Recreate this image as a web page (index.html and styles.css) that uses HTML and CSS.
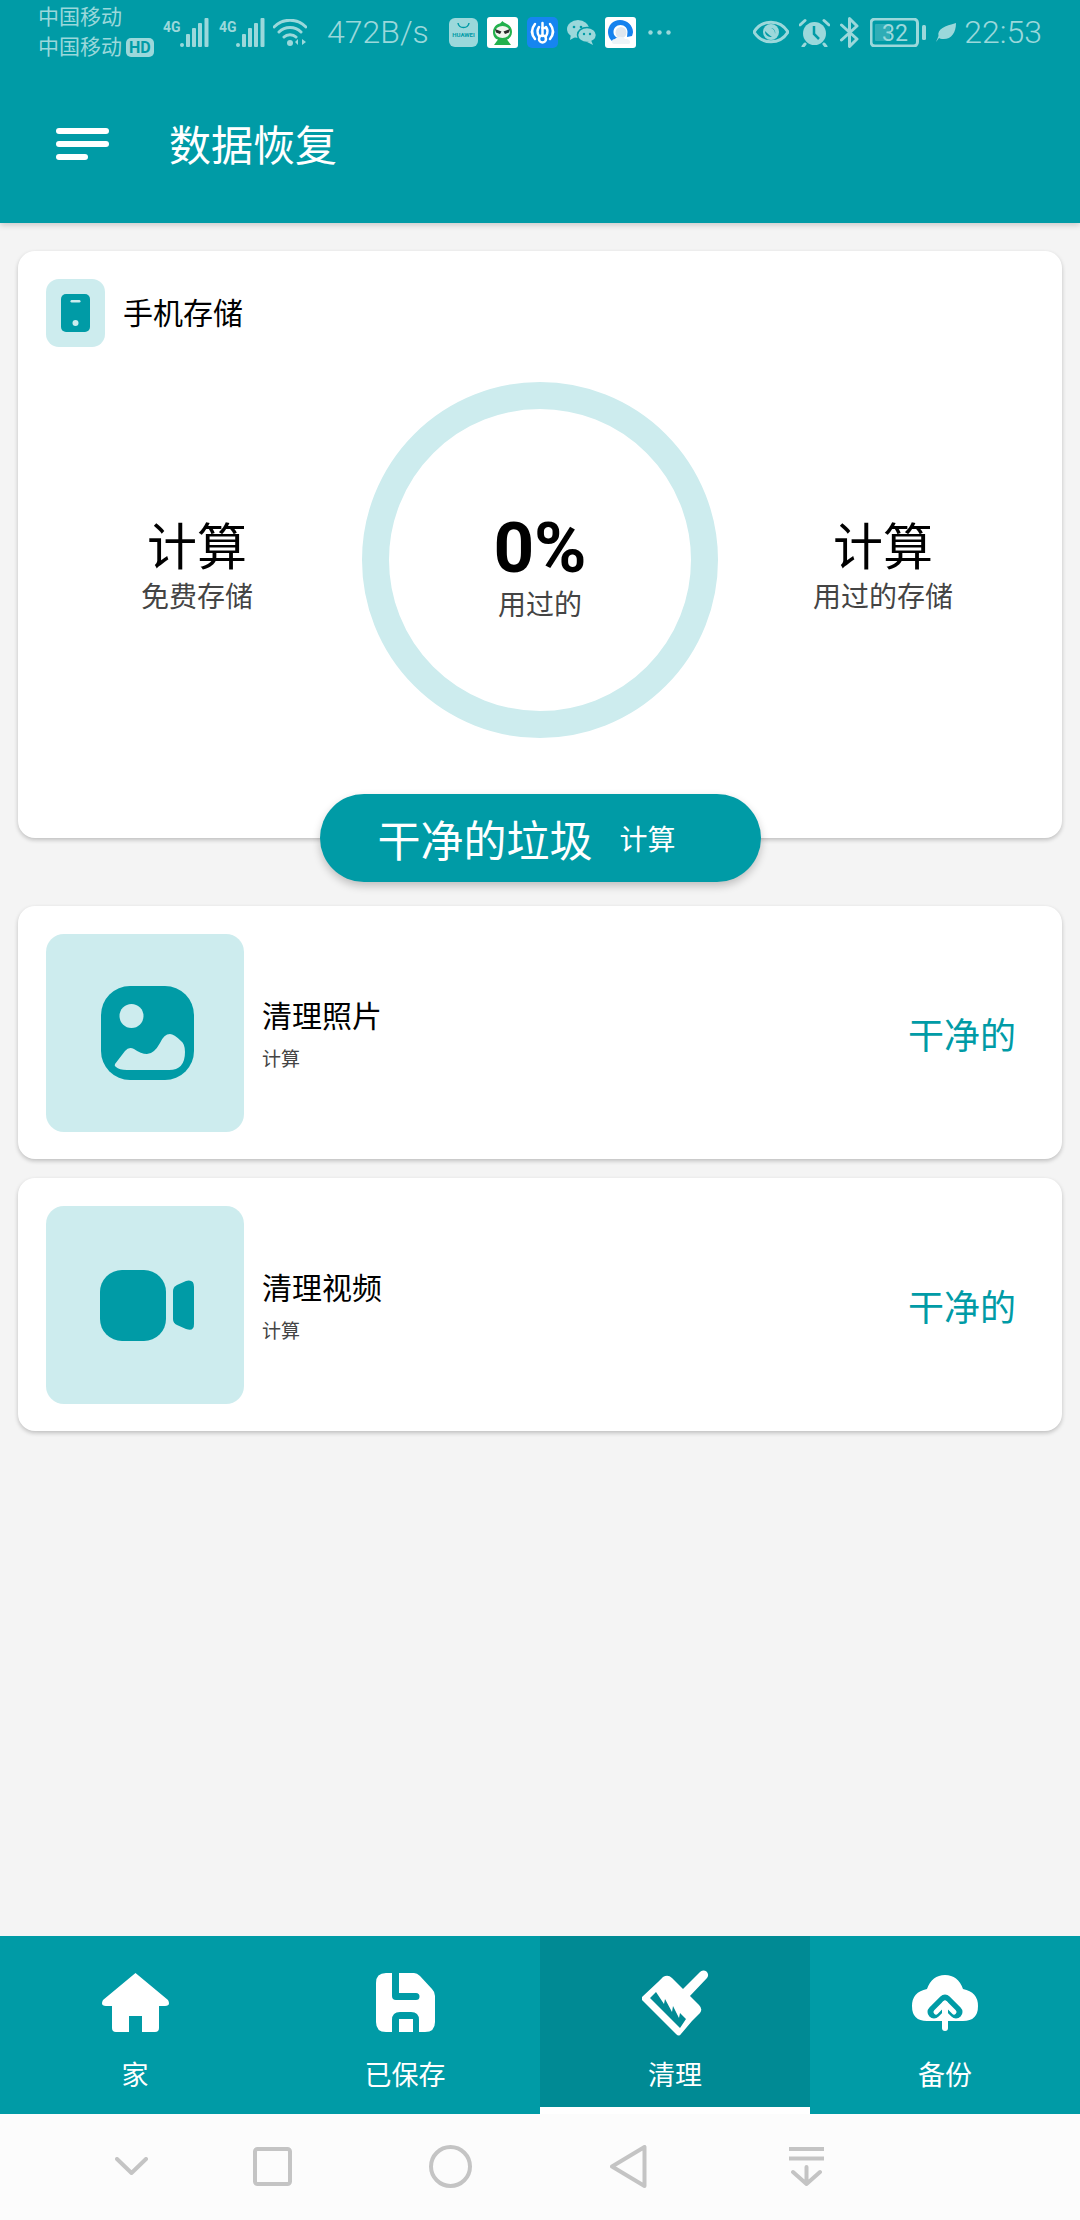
FILE: index.html
```html
<!DOCTYPE html>
<html>
<head>
	<title>数据恢复</title>
	<link rel="stylesheet" href="styles.css">
</head>
<body>
	<header class="app-header">
		<div class="status-bar">
			<div class="carriers">
				<div>中国移动</div>
				<div>中国移动<span class="hd">HD</span></div>
			</div>
			<svg class="signal" width="46" height="29" viewBox="0 0 46 29"><text x="0" y="14" class="net-type">4G</text><rect x="17" y="25" width="4" height="4" rx="2"/><rect x="23" y="16" width="4" height="13" rx="1"/><rect x="29" y="10" width="4" height="19" rx="1"/><rect x="35" y="5" width="4" height="24" rx="1"/><rect x="41.5" y="0" width="4" height="29" rx="1"/></svg>
			<svg class="signal" width="46" height="29" viewBox="0 0 46 29"><text x="0" y="14" class="net-type">4G</text><rect x="17" y="25" width="4" height="4" rx="2"/><rect x="23" y="16" width="4" height="13" rx="1"/><rect x="29" y="10" width="4" height="19" rx="1"/><rect x="35" y="5" width="4" height="24" rx="1"/><rect x="41.5" y="0" width="4" height="29" rx="1"/></svg>
			<svg class="wifi" width="34" height="27" viewBox="0 0 34 27"><path d="M1 8C10 -1 24 -1 33 8M6 13C12 7 22 7 28 13M11 18C14 15 20 15 23 18" class="line"/><circle cx="17" cy="24" r="3"/><path d="M25 26V20L22 23ZM29 20V26L33 23Z"/></svg>
			<span class="speed">472B/s</span>
			<div class="app-icons">
				<svg width="29" height="29" viewBox="0 0 29 29"><rect width="29" height="29" rx="6"/><path d="M9 5C10 11 19 11 20 5" class="bag"/><text x="14.500" y="19" class="huawei">HUAWEI</text></svg>
				<svg width="31" height="31" viewBox="0 0 31 31"><rect width="31" height="31" rx="3" fill="#fff"/><path d="M15.500 4C16 5 18 6 19 6.500C23 8 25 11 25 15C25 19 22 22 20 22.500L24 28H7L11 22.500C8 22 6 19 6 15C6 10 10 7 13 6.500Z" fill="#23b14d"/><ellipse cx="15.500" cy="15" rx="7.500" ry="6" fill="#f1f5ee"/><path d="M8 12L14.500 14.500L13 17L9 15.500ZM23 12L16.500 14.500L18 17L22 15.500Z" fill="#2b2b2b"/></svg>
				<svg width="31" height="31" viewBox="0 0 31 31"><rect width="31" height="31" rx="5" fill="#1685f0"/><path d="M8 7C4 12 4 17 8 22M12 10C10 13 10 16 12 19M23 7C27 12 27 17 23 22M19 10C21 13 21 16 19 19" class="key"/><path d="M15.500 6V19" class="key"/><path d="M15.500 11H19" class="key"/><circle cx="15.500" cy="22" r="3.500" class="key"/></svg>
				<svg width="29" height="25" viewBox="0 0 29 25"><ellipse cx="11" cy="9" rx="11" ry="9"/><path d="M4 14L3 20L10 16Z"/><ellipse cx="20" cy="15" rx="9.500" ry="7.500" stroke="#009ba6" stroke-width="1.500"/><path d="M24 20L26 25L20 22Z"/><circle cx="7" cy="7" r="1.300" fill="#009ba6"/><circle cx="14" cy="7" r="1.300" fill="#009ba6"/><circle cx="17" cy="14" r="1.200" fill="#009ba6"/><circle cx="23" cy="14" r="1.200" fill="#009ba6"/></svg>
				<svg width="31" height="31" viewBox="0 0 31 31"><rect width="31" height="31" rx="3" fill="#fff"/><path d="M15 3C8 3 3 8.500 3 15C3 20 6 24 10 26L14 21C10.500 20.500 8.500 18 8.500 15C8.500 11 11.500 8 15.500 8C19.500 8 22.500 11 22.500 15L22 20L27 19C27.500 17.500 28 16 28 15C28 8.500 22 3 15 3Z" fill="#1682ee"/><circle cx="16" cy="15.500" r="5.500" fill="#dfe6ee"/><path d="M9 27C6 27 6 22 10 22C12 19 18 19 20 22C25 21 27 27 23 27Z" fill="#eef3f8"/></svg>
				<svg class="more" width="23" height="5" viewBox="0 0 23 5"><circle cx="2.500" cy="2.500" r="2.200"/><circle cx="11.500" cy="2.500" r="2.200"/><circle cx="20.500" cy="2.500" r="2.200"/></svg>
			</div>
			<div class="status-right">
				<svg width="36" height="24" viewBox="0 0 36 24"><path d="M1 12C9 -1 27 -1 35 12C27 25 9 25 1 12Z" class="line"/><circle cx="18" cy="12" r="8"/><path d="M18 8A4.500 4.500 0 0 1 22 14A6 6 0 0 0 18 8Z" fill="#009ba6"/><path d="M12 11C12 15 15 17 19 17C16 15 14 13 12 11Z" fill="#009ba6"/></svg>
				<svg width="31" height="29" viewBox="0 0 31 29"><circle cx="15.500" cy="15.500" r="11.500"/><path d="M1 7L6 2.500M30 7L25 2.500M6 26L4 28.500M25 26L27 28.500" class="line"/><path d="M15 8V16L20 21" stroke="#009ba6" stroke-width="2.500" fill="none"/></svg>
				<svg width="20" height="31" viewBox="0 0 20 31"><path d="M1.500 8L17 22L9.500 29.500V1.500L17 9L1.500 23" class="line"/></svg>
				<svg width="56" height="29" viewBox="0 0 56 29"><rect x="1" y="1" width="46.500" height="27" rx="4" class="line"/><rect x="5" y="6" width="15" height="17" rx="1" class="battery-fill"/><text x="25" y="23" class="battery-text">32</text><rect x="52" y="7" width="4" height="15" rx="1.500"/></svg>
				<svg width="20" height="19" viewBox="0 0 20 19"><path d="M20 0C20 10 15 17 6 16C5 16 4 15.500 3 15L0 19C1 17 2 14 2.500 13C1 6 9 3 20 0Z"/></svg>
				<span class="clock">22:53</span>
			</div>
		</div>
		<div class="toolbar">
			<div class="menu-icon"><i></i><i></i><i class="short"></i></div>
			<h1 class="page-title">数据恢复</h1>
		</div>
	</header>

	<main class="content">
		<section class="card storage-card">
			<div class="storage-head">
				<div class="phone-box">
					<svg width="29" height="38" viewBox="0 0 29 38"><rect width="29" height="38" rx="5" fill="#009ba6"/><rect x="9.500" y="6" width="10" height="2.500" rx="1.200" fill="#cdecee"/><circle cx="14.500" cy="29" r="3" fill="#cdecee"/></svg>
				</div>
				<span class="storage-name">手机存储</span>
			</div>
			<div class="storage-body">
				<div class="stat">
					<div class="stat-value">计算</div>
					<div class="stat-label">免费存储</div>
				</div>
				<div class="ring">
					<div class="ring-value">0%</div>
					<div class="ring-label">用过的</div>
				</div>
				<div class="stat">
					<div class="stat-value">计算</div>
					<div class="stat-label">用过的存储</div>
				</div>
			</div>
		</section>

		<button class="clean-button"><span class="clean-title">干净的垃圾</span><span class="clean-size">计算</span></button>

		<section class="card clean-row">
			<div class="thumb">
				<svg width="93" height="94" viewBox="0 0 93 94"><rect width="93" height="94" rx="29" fill="#009ba6"/><circle cx="30.500" cy="30" r="12" fill="#cdecee"/><path d="M14 78L24 65Q28 60 33 63Q40 68 46 68Q53 68 59 57Q63 48 69 48Q73 48 80 55Q84 58 84 66Q84 84 68 84H26Q18 84 15 81Q13 80 14 78Z" fill="#cdecee"/></svg>
			</div>
			<div class="row-text">
				<div class="row-title">清理照片</div>
				<div class="row-sub">计算</div>
			</div>
			<span class="row-action">干净的</span>
		</section>

		<section class="card clean-row">
			<div class="thumb">
				<svg width="94" height="71" viewBox="0 0 94 71"><rect width="66" height="71" rx="22" fill="#009ba6"/><path d="M73 21Q73 17 77 15L86 11Q94 9 94 17V54Q94 62 86 59L77 55Q73 53 73 49Z" fill="#009ba6"/></svg>
			</div>
			<div class="row-text">
				<div class="row-title">清理视频</div>
				<div class="row-sub">计算</div>
			</div>
			<span class="row-action">干净的</span>
		</section>
	</main>

	<nav class="tabs">
		<div class="tab">
			<div class="tab-icon"><svg width="67" height="59" viewBox="0 0 67 59"><path d="M33.500 0L66 27Q69 33 63 33H57V55Q57 59 53 59H40V43H27V59H14Q10 59 10 55V33H4Q-2 33 1 27Z" fill="#fff"/></svg></div>
			<span class="tab-label">家</span>
		</div>
		<div class="tab">
			<div class="tab-icon"><svg width="59" height="59" viewBox="0 0 59 59"><path d="M10 0H38Q41 0 44 3L56 16Q59 19 59 23V49Q59 59 49 59H10Q0 59 0 49V10Q0 0 10 0Z" fill="#fff"/><path d="M16 0H23V20H40A3.500 3.500 0 0 1 40 27H20Q16 27 16 23ZM16 59V47Q16 39 24 39H35Q43 39 43 47V59H37V46H23V59Z" fill="#009ba6"/></svg></div>
			<span class="tab-label">已保存</span>
		</div>
		<div class="tab active">
			<div class="tab-icon"><svg width="67" height="67" viewBox="0 0 67 67"><path d="M40 21L58 3A4.500 4.500 0 0 1 65 9L47 28Z" fill="#fff"/><path d="M0 28L16 13L21 8Q26 5 30 9L57 36Q61 40 58 44L50 52L39 65Q37 68 34 65L1 32Q-1 30 0 28Z" fill="#fff"/><path d="M8 29L14 23L22 35L23 30L30 43L31 37L37 49L38 44L44 50L38 59Z" fill="#008a94"/></svg></div>
			<span class="tab-label">清理</span>
		</div>
		<div class="tab">
			<div class="tab-icon"><svg width="66" height="56" viewBox="0 0 66 56"><path d="M15 46Q0 46 0 31Q0 17 15 14Q20 0 33 0Q46 0 51 14Q66 17 66 31Q66 46 51 46Z" fill="#fff"/><path d="M22 37L33 26L44 37" stroke="#009ba6" stroke-width="13" stroke-linecap="round" stroke-linejoin="round" fill="none"/><path d="M33 53V29" stroke="#fff" stroke-width="6" stroke-linecap="round"/><path d="M24 37L33 28L42 37" stroke="#fff" stroke-width="5" stroke-linecap="round" stroke-linejoin="round" fill="none"/></svg></div>
			<span class="tab-label">备份</span>
		</div>
	</nav>

	<div class="system-nav">
		<svg width="33" height="18" viewBox="0 0 33 18"><path d="M2 2L16.500 16L31 2" class="sys-line"/></svg>
		<svg width="39" height="39" viewBox="0 0 39 39"><rect x="2" y="2" width="35" height="35" rx="2.500" class="sys-line"/></svg>
		<svg width="43" height="43" viewBox="0 0 43 43"><circle cx="21.500" cy="21.500" r="19.500" class="sys-line"/></svg>
		<svg width="37" height="43" viewBox="0 0 37 43"><path d="M2 21.500L34.500 2V41Z" class="sys-line"/></svg>
		<svg width="35" height="39" viewBox="0 0 35 39"><path d="M0 2H35M0 11.500H35" class="sys-line"/><path d="M17.500 20V37M4 25L17.500 37L31 25" class="sys-line"/></svg>
	</div>
</body>
</html>
```

FILE: styles.css
```css
* {
	box-sizing: border-box;
}

body {
	margin: 0;
	width: 1080px;
	height: 2220px;
	display: flex;
	flex-direction: column;
	overflow: hidden;
	background-color: #f4f4f4;
	font-family: Roboto, "Noto Sans CJK SC", sans-serif;
}

.app-header {
	height: 223px;
	background-color: #009ba6;
	box-shadow: 0 2px 6px rgba(0,0,0,0.18);
	position: relative;
}

/* status bar */
.status-bar {
	height: 64px;
	display: flex;
	align-items: center;
	gap: 10px;
	padding: 0 38px;
	color: #9bd8db;
	fill: #9bd8db;
}

.carriers {
	width: 115px;
	font-size: 21px;
	line-height: 30px;
	white-space: nowrap;
}

.hd {
	display: inline-block;
	margin-left: 4px;
	padding: 0 3px;
	background-color: #9bd8db;
	color: #009ba6;
	border-radius: 5px;
	font-size: 16px;
	font-weight: 700;
	line-height: 19px;
	vertical-align: 1px;
}

.net-type {
	font-size: 14px;
	font-weight: 700;
}

.line {
	fill: none;
	stroke: #9bd8db;
	stroke-width: 3;
	stroke-linecap: round;
	stroke-linejoin: round;
}

.wifi {
	margin-left: -2px;
}

.speed {
	width: 99px;
	margin-left: 10px;
	font-size: 32px;
	font-weight: 300;
	white-space: nowrap;
}

.app-icons {
	display: flex;
	align-items: center;
	gap: 9px;
	margin-left: 13px;
}

.bag {
	fill: none;
	stroke: #009ba6;
	stroke-width: 1.5;
}

.huawei {
	font-size: 6px;
	font-weight: 700;
	fill: #009ba6;
	text-anchor: middle;
}

.key {
	fill: none;
	stroke: #fff;
	stroke-width: 2.5;
	stroke-linecap: round;
}

.more {
	margin-left: 3px;
}

.status-right {
	margin-left: auto;
	display: flex;
	align-items: center;
	gap: 10px;
}

.battery-fill {
	opacity: 0.3;
}

.battery-text {
	font-size: 23px;
	font-weight: 400;
	text-anchor: middle;
}

.clock {
	margin-left: -2px;
	font-size: 32px;
	font-weight: 300;
}

/* toolbar */
.toolbar {
	height: 159px;
	display: flex;
	align-items: center;
	padding: 0 0 0 56px;
}

.menu-icon {
	width: 53px;
	display: flex;
	flex-direction: column;
	gap: 7px;
	margin-right: 60px;
}

.menu-icon i {
	display: block;
	height: 6px;
	border-radius: 3px;
	background-color: #fff;
}

.menu-icon .short {
	width: 32px;
}

.page-title {
	margin: 0;
	padding-top: 7px;
	color: #fff;
	font-size: 42px;
	font-weight: 400;
	line-height: 60px;
}

/* content */
.content {
	flex: 1;
	padding: 28px 18px 0;
	display: flex;
	flex-direction: column;
}

.card {
	background-color: white;
	border-radius: 17px;
	box-shadow: 0 2px 4px rgba(0,0,0,0.22);
}

.storage-card {
	height: 587px;
	padding: 28px 14px 0;
}

.storage-head {
	display: flex;
	align-items: center;
	padding-left: 14px;
}

.phone-box {
	width: 59px;
	height: 68px;
	border-radius: 13px;
	background-color: #cdecee;
	display: flex;
	align-items: center;
	justify-content: center;
	margin-right: 18px;
}

.storage-name {
	font-size: 30px;
	line-height: 40px;
	margin-top: 2px;
	color: #000;
}

.storage-body {
	display: grid;
	grid-template-columns: 330px 356px 330px;
	margin-top: 35px;
}

.stat {
	padding-top: 136px;
	text-align: center;
}

.stat-value {
	font-size: 50px;
	line-height: 61px;
	color: #000;
}

.stat-label {
	font-size: 28px;
	line-height: 38px;
	color: #444;
}

.ring {
	height: 356px;
	padding-top: 14px;
	border: 27px solid #cdecee;
	border-radius: 50%;
	display: flex;
	flex-direction: column;
	align-items: center;
	justify-content: center;
}

.ring-value {
	font-size: 71px;
	font-weight: 700;
	line-height: 78px;
	color: #000;
}

.ring-label {
	font-size: 28px;
	line-height: 38px;
	color: #444;
}

.clean-button {
	position: relative;
	width: 441px;
	height: 88px;
	margin: -44px auto 24px;
	padding: 0 0 0 58px;
	border: none;
	border-radius: 44px;
	background-color: #009ba6;
	box-shadow: 0 4px 8px rgba(0,0,0,0.22);
	color: #fff;
	font-family: inherit;
	display: flex;
	align-items: center;
}

.clean-title {
	font-size: 43px;
	margin-right: 27px;
}

.clean-size {
	font-size: 28px;
}

.clean-row {
	height: 253px;
	padding: 28px 46px 27px 28px;
	margin-bottom: 19px;
	display: flex;
	align-items: center;
}

.thumb {
	width: 198px;
	height: 198px;
	padding-left: 4px;
	border-radius: 18px;
	background-color: #cdecee;
	display: flex;
	align-items: center;
	justify-content: center;
	margin-right: 18px;
}

.row-title {
	padding-top: 3px;
	font-size: 30px;
	line-height: 42px;
	color: #000;
}

.row-sub {
	margin-top: 9px;
	font-size: 19px;
	line-height: 26px;
	color: #444;
}

.row-action {
	margin-left: auto;
	font-size: 36px;
	color: #009ba6;
}

/* bottom tabs */
.tabs {
	height: 178px;
	display: grid;
	grid-template-columns: repeat(4, 1fr);
	background-color: #009ba6;
}

.tab {
	display: flex;
	flex-direction: column;
	align-items: center;
	padding-top: 33px;
	color: #fff;
}

.tab.active {
	background-color: #008a94;
	border-bottom: 7px solid #fff;
}

.tab-icon {
	height: 67px;
	display: flex;
	align-items: center;
	justify-content: center;
}

.tab-label {
	margin-top: 22px;
	font-size: 27px;
	line-height: 36px;
}

/* system navigation */
.system-nav {
	height: 106px;
	padding: 0 0 2px 79px;
	display: grid;
	grid-template-columns: 104px repeat(4, 178px);
	align-items: center;
	justify-items: center;
	background-color: #fcfcfc;
}

.sys-line {
	fill: none;
	stroke: #c4c4c4;
	stroke-width: 4;
	stroke-linecap: round;
	stroke-linejoin: round;
}
```
